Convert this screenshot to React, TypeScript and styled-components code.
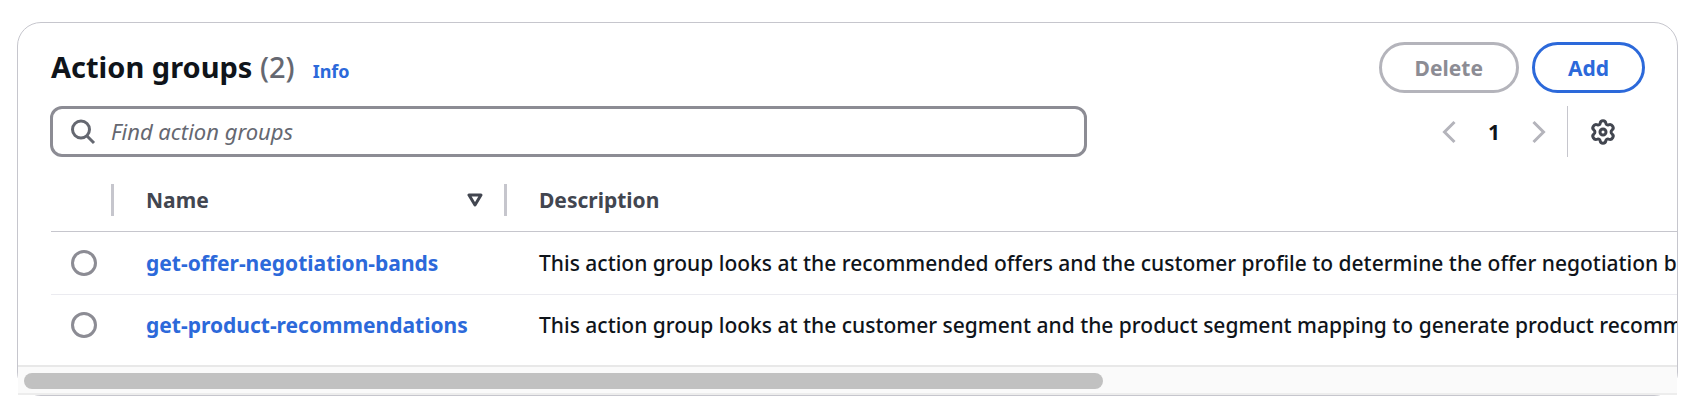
import React, { useState } from "react";
import styled, { createGlobalStyle } from "styled-components";

const color = {
  text: "#0f141a",
  heading: "#424650",
  muted: "#656871",
  link: "#2c69da",
  control: "#8c8c94",
  disabled: "#b4b4bb",
  border: "#c6c6cd",
  rowBorder: "#ebebf0",
};

const font = '"Noto Sans", "Open Sans", sans-serif';

const GlobalStyle = createGlobalStyle`
  *, *::before, *::after { box-sizing: border-box; }
  body {
    margin: 0;
    background: #fff;
    color: ${color.text};
    font: 500 21px/30px ${font};
  }
  button, input { font: inherit; color: inherit; }
`;

const Page = styled.main`
  padding: 22px 24px 24px 17px;
`;

const Card = styled.section`
  display: flex;
  flex-direction: column;
  border: 1px solid ${color.border};
  border-radius: 24px;
  background: #fff;
`;

const Header = styled.header`
  display: flex;
  align-items: center;
  justify-content: space-between;
  padding: 19px 32px 0 33px;
`;

const TitleGroup = styled.div`
  display: flex;
  align-items: baseline;
  gap: 18px;
`;

const Title = styled.h2`
  margin: 0;
  font-size: 29px;
  line-height: 36px;
  font-weight: 700;
`;

const Count = styled.span`
  color: ${color.muted};
  font-weight: 500;
`;

const InfoLink = styled.a`
  color: ${color.link};
  font-size: 18px;
  font-weight: 700;
  text-decoration: none;
`;

const Actions = styled.div`
  display: flex;
  gap: 13px;
`;

const Button = styled.button<{ $primary?: boolean }>`
  height: 51px;
  padding: 0 33px;
  border: 3px solid ${(p) => (p.$primary ? color.link : color.disabled)};
  border-radius: 26px;
  background: #fff;
  color: ${(p) => (p.$primary ? color.link : color.control)};
  font-weight: 700;
`;

const Toolbar = styled.div`
  display: flex;
  align-items: center;
  justify-content: space-between;
  padding: 13px 32px 0;
`;

const SearchBox = styled.label`
  display: flex;
  align-items: center;
  gap: 15px;
  width: 65%;
  height: 51px;
  padding: 0 17px;
  border: 3px solid ${color.control};
  border-radius: 12px;
  color: ${color.muted};
`;

const SearchInput = styled.input`
  flex: 1;
  min-width: 0;
  padding: 0 0 2px;
  border: 0;
  outline: 0;
  background: transparent;
  font-size: 22px;
  &::placeholder {
    color: ${color.muted};
    font-style: italic;
    font-weight: 400;
    opacity: 1;
  }
`;

const Preferences = styled.div`
  display: flex;
  align-items: center;
  height: 51px;
  padding-right: 28px;
`;

const Pagination = styled.nav`
  display: flex;
  align-items: center;
  gap: 32px;
  padding-right: 21px;
`;

const IconButton = styled.button`
  display: flex;
  padding: 0;
  border: 0;
  background: transparent;
  color: ${color.heading};
  &:disabled { color: ${color.disabled}; }
`;

const PageNumber = styled.button`
  padding: 0;
  border: 0;
  background: transparent;
  color: ${color.text};
  font-weight: 700;
`;

const Separator = styled.span`
  align-self: stretch;
  width: 1px;
  margin-right: 21px;
  background: ${color.border};
`;

const Scroller = styled.div`
  overflow-x: auto;
  scrollbar-width: none;
  margin-top: 11px;
  padding: 0 0 11px 33px;
`;

const Table = styled.table`
  width: 2500px;
  border-collapse: separate;
  border-spacing: 0;
  table-layout: fixed;
  white-space: nowrap;
`;

const SelectCol = styled.col` width: 63px; `;
const NameCol = styled.col` width: 393px; `;

const HeadCell = styled.th`
  height: 64px;
  padding: 0;
  border-bottom: 1px solid ${color.border};
  color: ${color.heading};
  text-align: left;
`;

const HeadContent = styled.div<{ $divided?: boolean }>`
  display: flex;
  align-items: center;
  justify-content: space-between;
  height: 32px;
  padding: 0 21px 0 32px;
  border-right: ${(p) => (p.$divided ? `3px solid ${color.border}` : "0")};
`;

const Cell = styled.td`
  height: 59px;
  padding: 0 0 0 32px;
`;

const Row = styled.tr`
  &:not(:last-child) > ${Cell} {
    height: 63px;
    border-bottom: 1px solid ${color.rowBorder};
  }
`;

const SelectCell = styled(Cell)`
  padding: 0 0 0 20px;
`;

const Radio = styled.input`
  display: block;
  appearance: none;
  width: 26px;
  height: 26px;
  margin: 0;
  border: 3px solid ${color.control};
  border-radius: 50%;
  background: #fff;
  &:checked { border: 8px solid ${color.link}; }
`;

const NameLink = styled.a`
  color: ${color.link};
  font-weight: 700;
  text-decoration: none;
`;

const Track = styled.div`
  height: 30px;
  padding: 6px;
  border-top: 2px solid #e8e8e8;
  border-bottom: 2px solid #ededed;
  background: #fafafa;
`;

const Thumb = styled.div`
  width: 65.5%;
  height: 16px;
  border-radius: 8px;
  background: #c1c1c1;
`;

const SearchIcon = () => (
  <svg width="26" height="26" viewBox="0 0 26 26" fill="none" stroke="currentColor" strokeWidth="3" aria-hidden="true">
    <circle cx="11" cy="10.500" r="8.500" />
    <path d="M16.500 16.500l7.500 7.500" />
  </svg>
);

const Chevron = ({ next }: { next?: boolean }) => (
  <svg width="14" height="24" viewBox="0 0 14 24" fill="none" stroke="currentColor" strokeWidth="3" aria-hidden="true">
    <path d={next ? "M1.500 2L11.500 12L1.500 22" : "M12.500 2L2.500 12L12.500 22"} />
  </svg>
);

const GearIcon = () => (
  <svg width="28" height="28" viewBox="0 0 28 28" fill="none" stroke="currentColor" strokeWidth="3" strokeLinejoin="round" aria-hidden="true">
    <path d="M14 2.800C16.200 2.800 16.700 4 16.900 5.400C17.100 6.700 18.300 7.300 19.500 6.800C21.300 6.100 22.700 6.500 23.700 8.300C24.700 10 24.300 11.200 23 12.100C21.800 13 21.800 15 23 15.900C24.300 16.800 24.700 18 23.700 19.700C22.700 21.500 21.300 21.900 19.500 21.200C18.300 20.700 17.100 21.300 16.900 22.600C16.700 24 16.200 25.200 14 25.200C11.800 25.200 11.300 24 11.100 22.600C10.900 21.300 9.700 20.700 8.500 21.200C6.700 21.900 5.300 21.500 4.300 19.700C3.300 18 3.700 16.800 5 15.900C6.200 15 6.200 13 5 12.100C3.700 11.200 3.300 10 4.300 8.300C5.300 6.500 6.700 6.100 8.500 6.800C9.700 7.300 10.900 6.700 11.100 5.400C11.300 4 11.800 2.800 14 2.800Z" />
    <circle cx="14" cy="14" r="3" />
  </svg>
);

const SortIcon = () => (
  <svg width="16" height="14" viewBox="0 0 16 14" fill="none" stroke="currentColor" strokeWidth="3" strokeLinejoin="round" aria-hidden="true">
    <path d="M2 2h12L8 12z" />
  </svg>
);

const actionGroups = [
  {
    name: "get-offer-negotiation-bands",
    description:
      "This action group looks at the recommended offers and the customer profile to determine the offer negotiation bands",
  },
  {
    name: "get-product-recommendations",
    description:
      "This action group looks at the customer segment and the product segment mapping to generate product recommendations",
  },
];

export default function App() {
  const [query, setQuery] = useState("");
  const [selected, setSelected] = useState("");

  return (
    <>
      <GlobalStyle />
      <Page>
        <Card aria-labelledby="action-groups-title">
          <Header>
            <TitleGroup>
              <Title id="action-groups-title">
                Action groups <Count>({actionGroups.length})</Count>
              </Title>
              <InfoLink href="#info">Info</InfoLink>
            </TitleGroup>
            <Actions>
              <Button type="button" disabled={!selected}>Delete</Button>
              <Button type="button" $primary>Add</Button>
            </Actions>
          </Header>

          <Toolbar>
            <SearchBox>
              <SearchIcon />
              <SearchInput
                type="text"
                aria-label="Find action groups"
                placeholder="Find action groups"
                value={query}
                onChange={(e) => setQuery(e.target.value)}
              />
            </SearchBox>
            <Preferences>
              <Pagination aria-label="Pagination">
                <IconButton type="button" disabled aria-label="Previous page"><Chevron /></IconButton>
                <PageNumber type="button" aria-current="page">1</PageNumber>
                <IconButton type="button" disabled aria-label="Next page"><Chevron next /></IconButton>
              </Pagination>
              <Separator />
              <IconButton type="button" aria-label="Preferences"><GearIcon /></IconButton>
            </Preferences>
          </Toolbar>

          <Scroller>
            <Table>
              <colgroup>
                <SelectCol />
                <NameCol />
                <col />
              </colgroup>
              <thead>
                <tr>
                  <HeadCell scope="col" aria-label="Select"><HeadContent $divided /></HeadCell>
                  <HeadCell scope="col"><HeadContent $divided>Name<SortIcon /></HeadContent></HeadCell>
                  <HeadCell scope="col"><HeadContent>Description</HeadContent></HeadCell>
                </tr>
              </thead>
              <tbody>
                {actionGroups.map(({ name, description }) => (
                  <Row key={name}>
                    <SelectCell>
                      <Radio
                        type="radio"
                        name="action-group"
                        aria-label={name}
                        checked={selected === name}
                        onChange={() => setSelected(name)}
                      />
                    </SelectCell>
                    <Cell><NameLink href={`#${name}`}>{name}</NameLink></Cell>
                    <Cell>{description}</Cell>
                  </Row>
                ))}
              </tbody>
            </Table>
          </Scroller>
          <Track><Thumb /></Track>
        </Card>
      </Page>
    </>
  );
}
